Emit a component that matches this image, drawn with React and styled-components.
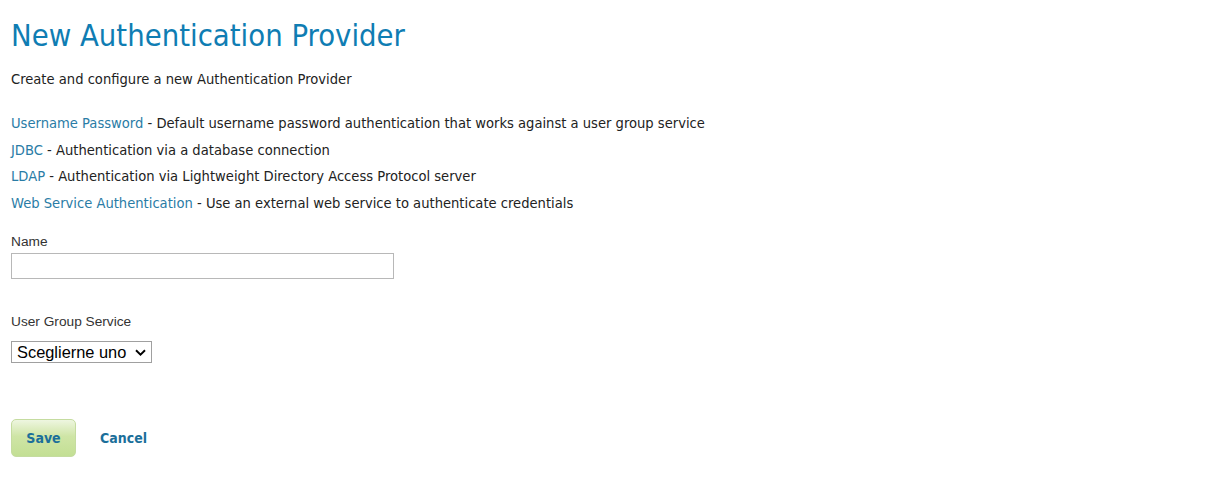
import React from 'react'
import styled, { createGlobalStyle } from 'styled-components'

const GlobalStyle = createGlobalStyle`
    body {
        margin: 0;
        background: #ffffff;
        font-family: 'DejaVu Sans Condensed', 'DejaVu Sans', sans-serif;
        color: #222222;
    }
`;

const providers = [
    { name: 'Username Password', text: 'Default username password authentication that works against a user group service' },
    { name: 'JDBC', text: 'Authentication via a database connection' },
    { name: 'LDAP', text: 'Authentication via Lightweight Directory Access Protocol server' },
    { name: 'Web Service Authentication', text: 'Use an external web service to authenticate credentials' },
];

const App = () => {
    return (
        <Page>
            <GlobalStyle />
            <Title>New Authentication Provider</Title>
            <Intro>Create and configure a new Authentication Provider</Intro>

            <ProviderList>
                {providers.map((p) => (
                    <ProviderRow key={p.name}>
                        <ProviderLink href="#">{p.name}</ProviderLink> - {p.text}
                    </ProviderRow>
                ))}
            </ProviderList>

            <Field>
                <FieldLabel>Name</FieldLabel>
                <NameInput type="text" />
            </Field>

            <Field>
                <FieldLabel>User Group Service</FieldLabel>
                <SelectWrap>
                    <Select defaultValue="">
                        <option value="">Sceglierne uno</option>
                    </Select>
                    <Chevron width="11" height="7" viewBox="0 0 11 7">
                        <path d="M1 1.2 L5.5 5.6 L10 1.2" fill="none" stroke="#000" strokeWidth="1.9" />
                    </Chevron>
                </SelectWrap>
            </Field>

            <Buttons>
                <SaveButton>Save</SaveButton>
                <CancelLink href="#">Cancel</CancelLink>
            </Buttons>
        </Page>
    );
};

// main container
const Page = styled.div`
    padding: 16px 11px 20px 11px;
`;

const Title = styled.h1`
    margin: 0;
    font-size: 30.7px;
    font-weight: normal;
    line-height: 40px;
    color: #0f7db3;
`;

const Intro = styled.p`
    margin: 14px 0 0 0;
    font-size: 14.6px;
    line-height: 18px;
`;

const ProviderList = styled.ul`
    list-style: none;
    margin: 22px 0 0 0;
    padding: 0;
`;

const ProviderRow = styled.li`
    font-size: 14.6px;
    line-height: 26.7px;
`;

const ProviderLink = styled.a`
    color: #2a7ca6;
    text-decoration: none;
`;

const Field = styled.div`
    display: flex;
    flex-direction: column;
    align-items: flex-start;
    margin-top: 17px;
    & + & {
        margin-top: 35px;
    }
`;

const FieldLabel = styled.label`
    font-family: 'Liberation Sans', Arial, sans-serif;
    font-size: 13.7px;
    line-height: 15px;
    color: #333333;
    margin-bottom: 4px;
`;

const NameInput = styled.input`
    box-sizing: border-box;
    width: 383px;
    height: 26px;
    border: 1px solid #b8b8b8;
    margin: 0;
`;

const SelectWrap = styled.div`
    position: relative;
    margin-top: 8px;
`;

const Select = styled.select`
    display: block;
    box-sizing: border-box;
    appearance: none;
    height: 22px;
    width: 141px;
    padding: 0 0 0 5px;
    font-family: 'Liberation Sans', Arial, sans-serif;
    font-size: 16.4px;
    border: 1px solid #a0a0a0;
    border-radius: 0;
    background: #ffffff;
    color: #000000;
`;

const Chevron = styled.svg`
    position: absolute;
    right: 6px;
    top: 8px;
    pointer-events: none;
`;

const Buttons = styled.div`
    display: flex;
    align-items: center;
    gap: 24px;
    margin-top: 56px;
`;

const SaveButton = styled.button`
    width: 65px;
    height: 38px;
    border: 1px solid #c5dca0;
    border-radius: 5px;
    background: linear-gradient(to bottom, #eef6e0 0%, #cfe5a6 45%, #c3df94 100%);
    font-family: 'DejaVu Sans Condensed', 'DejaVu Sans', sans-serif;
    font-weight: bold;
    font-size: 14px;
    color: #1b6f9a;
    cursor: pointer;
`;

const CancelLink = styled.a`
    font-weight: bold;
    font-size: 14px;
    color: #1b6f9a;
    text-decoration: none;
`;

export default App
